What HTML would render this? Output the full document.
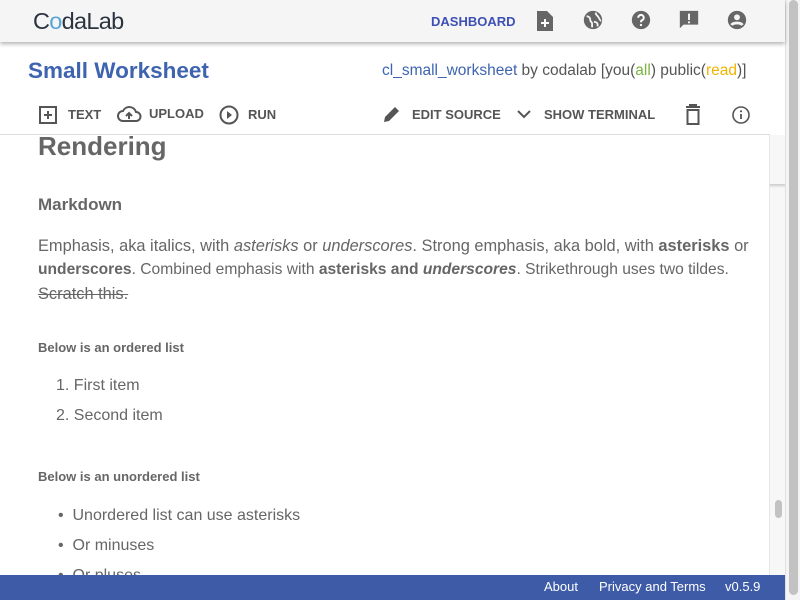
<!DOCTYPE html>
<html><head><meta charset="utf-8"><style>
*{margin:0;padding:0;box-sizing:border-box}
body{width:800px;height:600px;overflow:hidden;background:#fff;font-family:"Liberation Sans",Arial,sans-serif;color:#666;position:relative}
.hdr{position:absolute;left:0;top:0;width:785px;height:42px;background:#f5f5f5;box-shadow:0 2px 4px rgba(0,0,0,.3);z-index:3}
.logo{position:absolute;left:33px;top:8px;font-size:23.5px;color:#2a3440;letter-spacing:-0.7px}
.dash{position:absolute;left:431px;top:14px;font-size:13px;font-weight:bold;color:#3e50b4}
.ic{position:absolute;top:9px}
.title{position:absolute;left:28px;top:58px;font-size:22.5px;font-weight:bold;color:#3e64b0}
.meta{position:absolute;left:382px;top:62px;font-size:15.5px;color:#555;white-space:nowrap}
.tb{position:absolute;top:107px;font-size:13px;font-weight:bold;color:#555;white-space:nowrap}
.tbi{position:absolute}
.line{position:absolute;left:0;top:134px;width:770px;height:1px;background:#ddd}
.content{position:absolute;left:0;top:135px;width:769px;height:440px;overflow:hidden}
.content div{position:absolute;white-space:nowrap}
.p{font-size:16px}
.sb1{position:absolute;left:769px;top:135px;width:16px;height:440px;background:#f7f7f7;border-left:1px solid #e6e6e6}
.sb2{position:absolute;left:785px;top:0;width:15px;height:600px;background:#f4f4f4;border-left:1px solid #e0e0e0}
.foot{position:absolute;left:0;top:575px;width:785px;height:25px;background:#3e5ba8;color:#fff;font-size:13px}
.foot span{position:absolute;top:4px}
</style></head><body>
<div class="hdr">
<div class="logo">C<span style="color:#5aa5d8">o</span>daLab</div>
<div class="dash">DASHBOARD</div>
<svg class="ic" style="left:535px" width="20" height="24" viewBox="0 0 20 24"><path d="M2 2h10l6 6v14H2z" fill="#666"/><path d="M10 10v8M6 14h8" stroke="#fff" stroke-width="2"/></svg>
<svg class="ic" style="left:582px" width="22" height="22" viewBox="0 0 24 24"><circle cx="12" cy="12" r="10" fill="#666"/><path d="M5 8c3 0 4 2 4 4s2 2 2 4v4M15 4c0 3 2 3 3 5s2 4 3 4M13 14c2 0 4 1 4 3v2" stroke="#f5f5f5" stroke-width="2" fill="none"/></svg>
<svg class="ic" style="left:630px" width="22" height="22" viewBox="0 0 24 24"><circle cx="12" cy="12" r="10" fill="#666"/><path d="M9 9.5a3 3 0 1 1 4 2.8c-1 .4-1 1-1 2.2" stroke="#fff" stroke-width="2.2" fill="none"/><circle cx="12" cy="17.5" r="1.3" fill="#fff"/></svg>
<svg class="ic" style="left:678px" width="22" height="22" viewBox="0 0 24 24"><path d="M2 2h20v15H6l-4 4z" fill="#666"/><path d="M12 5v7M12 13.5v2" stroke="#fff" stroke-width="2"/></svg>
<svg class="ic" style="left:726px" width="22" height="22" viewBox="0 0 24 24"><circle cx="12" cy="12" r="10" fill="#666"/><circle cx="12" cy="9" r="3.2" fill="#f5f5f5"/><path d="M6 17.5c2-3 10-3 12 0" stroke="#f5f5f5" stroke-width="3" fill="none"/></svg>
</div>
<div class="title">Small Worksheet</div>
<div class="meta"><span style="color:#3e64b0">cl_small_worksheet</span> by codalab [you(<span style="color:#7cb342">all</span>) public(<span style="color:#f0b400">read</span>)]</div>

<svg class="tbi" style="left:38px;top:105px" width="20" height="20" viewBox="0 0 20 20"><rect x="2" y="2" width="16" height="16" fill="none" stroke="#555" stroke-width="2"/><path d="M10 6v8M6 10h8" stroke="#555" stroke-width="2"/></svg>
<div class="tb" style="left:68px">TEXT</div>
<svg class="tbi" style="left:116px;top:104px" width="26" height="20" viewBox="0 0 26 20"><path d="M7 17a5 5 0 0 1 0-10 7 7 0 0 1 13 1 4.5 4.5 0 0 1 0 9z" fill="none" stroke="#555" stroke-width="2"/><path d="M13 15V9M10 12l3-3 3 3" stroke="#555" stroke-width="2" fill="none"/></svg>
<div class="tb" style="left:149px;top:106px">UPLOAD</div>
<svg class="tbi" style="left:218px;top:104px" width="22" height="22" viewBox="0 0 22 22"><circle cx="11" cy="11" r="8.5" fill="none" stroke="#555" stroke-width="2"/><path d="M9 7l5 4-5 4z" fill="#555"/></svg>
<div class="tb" style="left:248px">RUN</div>
<svg class="tbi" style="left:382px;top:104px" width="20" height="20" viewBox="0 0 20 20"><path d="M2 18l1-5L13 3l4 4L7 17z" fill="#555"/></svg>
<div class="tb" style="left:412px">EDIT SOURCE</div>
<svg class="tbi" style="left:516px;top:108px" width="16" height="14" viewBox="0 0 16 14"><path d="M2 3l6 6 6-6" stroke="#555" stroke-width="2" fill="none"/></svg>
<div class="tb" style="left:544px">SHOW TERMINAL</div>
<svg class="tbi" style="left:684px;top:104px" width="18" height="22" viewBox="0 0 18 22"><path d="M2 3h14M6 3V1h6v2" stroke="#555" stroke-width="2" fill="none"/><rect x="3.5" y="6" width="11" height="14" fill="none" stroke="#555" stroke-width="2"/></svg>
<svg class="tbi" style="left:731px;top:105px" width="20" height="20" viewBox="0 0 20 20"><circle cx="10" cy="10" r="8" fill="none" stroke="#555" stroke-width="1.6"/><path d="M10 9v5" stroke="#555" stroke-width="1.8"/><circle cx="10" cy="6.3" r="1.1" fill="#555"/></svg>
<div class="line"></div>

<div class="content">
<div style="left:38px;top:-4px;font-size:26px;font-weight:bold;color:#666">Rendering</div>
<div style="left:38px;top:60px;font-size:17px;font-weight:bold">Markdown</div>
<div style="left:38px;top:99px;line-height:24px;font-size:16.4px">Emphasis, aka italics, with <i>asterisks</i> or <i>underscores</i>. Strong emphasis, aka bold, with <b>asterisks</b> or</div>
<div style="left:38px;top:123px;line-height:24px;font-size:15.6px"><b>underscores</b>. Combined emphasis with <b>asterisks and <i>underscores</i></b>. Strikethrough uses two tildes.</div>
<div style="left:38px;top:147px;line-height:24px;font-size:16.4px"><s>Scratch this.</s></div>
<div style="left:38px;top:205px;font-size:13px;font-weight:bold">Below is an ordered list</div>
<div class="p" style="left:56px;top:242px">1. First item</div>
<div class="p" style="left:56px;top:272px">2. Second item</div>
<div style="left:38px;top:334px;font-size:13px;font-weight:bold">Below is an unordered list</div>
<div class="p" style="left:58px;top:372px">•&nbsp;&nbsp;Unordered list can use asterisks</div>
<div class="p" style="left:58px;top:402px">•&nbsp;&nbsp;Or minuses</div>
<div class="p" style="left:58px;top:432px">•&nbsp;&nbsp;Or pluses</div>
</div>
<div class="sb1"><div style="position:absolute;left:0;top:49px;width:15px;height:4px;background:linear-gradient(#ccc,#f7f7f7)"></div><div style="position:absolute;left:5px;top:365px;width:7px;height:18px;border-radius:4px;background:#c2c2c2"></div></div>
<div class="sb2"><div style="position:absolute;left:3px;top:0;width:9px;height:595px;border-radius:5px;background:#c2c2c2"></div></div>
<div class="foot"><span style="left:544px">About</span><span style="left:599px">Privacy and Terms</span><span style="left:725px">v0.5.9</span></div>
</body></html>
